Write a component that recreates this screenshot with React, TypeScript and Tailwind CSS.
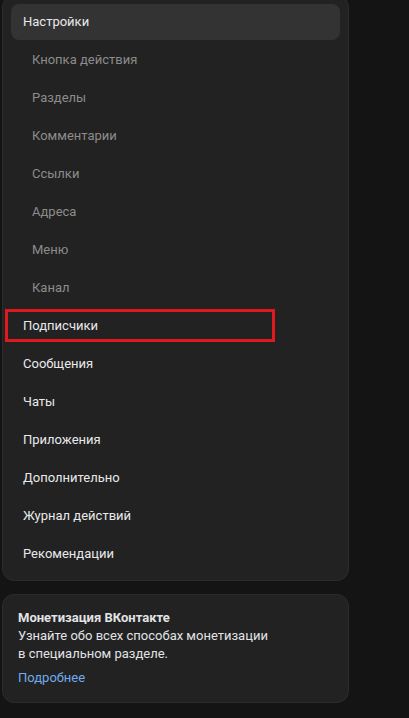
const subItems = ["Кнопка действия", "Разделы", "Комментарии", "Ссылки", "Адреса", "Меню", "Канал"];
const mainItems = ["Сообщения", "Чаты", "Приложения", "Дополнительно", "Журнал действий", "Рекомендации"];

function App() {
  return (
    <div className="w-full h-[718px] overflow-hidden bg-[#141414] pl-[2px] font-['Roboto',sans-serif]">
      <div className="w-[347px] -mt-[5px] rounded-xl border border-[#2c2c2c] bg-[#222222] p-2 flex flex-col gap-[2px]">
        <div className="h-[36px] flex items-center px-3 rounded-lg bg-[#333333] text-[13px] text-[#e8e9eb]">
          Настройки
        </div>
        {subItems.map((s) => (
          <div key={s} className="h-[36px] flex items-center pl-[21px] text-[13px] text-[#8c8c8c]">
            {s}
          </div>
        ))}
        {/* highlighted row */}
        <div className="relative h-[36px] flex items-center px-3 text-[13px] text-[#e8e9eb]">
          Подписчики
          <div className="absolute left-[-6px] top-[1px] w-[270px] h-[33px] border-[3px] border-[#e0191f]"></div>
        </div>
        {mainItems.map((s) => (
          <div key={s} className="h-[36px] flex items-center px-3 text-[13px] text-[#e8e9eb]">
            {s}
          </div>
        ))}
      </div>

      <div className="w-[347px] mt-[13px] rounded-xl border border-[#2c2c2c] bg-[#222222] px-[15px] pt-[14px] pb-[15px] text-[13px] leading-[18px] text-[#e1e3e6]">
        <div className="font-bold">Монетизация ВКонтакте</div>
        <div>Узнайте обо всех способах монетизации</div>
        <div>в специальном разделе.</div>
        <div className="mt-[6px] text-[#71aaeb]">Подробнее</div>
      </div>
    </div>
  );
}

export default App;
